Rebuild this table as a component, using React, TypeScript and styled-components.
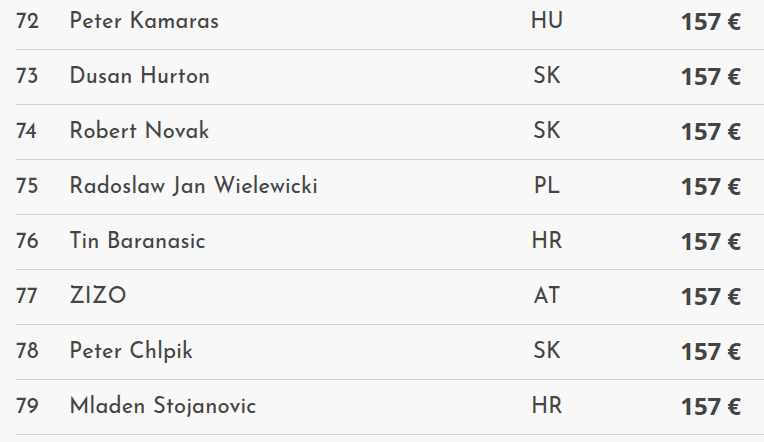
import React from "react";
import styled, { createGlobalStyle } from "styled-components";

const GlobalStyle = createGlobalStyle`
  html, body {
    margin: 0;
    padding: 0;
    background: #f8f8f8;
    overflow: hidden;
  }
  body {
    font-family: "Josefin Sans", Lato, "Liberation Sans", sans-serif;
    color: #444;
  }
`;

type Entry = { rank: number; name: string; country: string; price: string };

const ENTRIES: Entry[] = [
  { rank: 72, name: "Peter Kamaras", country: "HU", price: "157 €" },
  { rank: 73, name: "Dusan Hurton", country: "SK", price: "157 €" },
  { rank: 74, name: "Robert Novak", country: "SK", price: "157 €" },
  { rank: 75, name: "Radoslaw Jan Wielewicki", country: "PL", price: "157 €" },
  { rank: 76, name: "Tin Baranasic", country: "HR", price: "157 €" },
  { rank: 77, name: "ZIZO", country: "AT", price: "157 €" },
  { rank: 78, name: "Peter Chlpik", country: "SK", price: "157 €" },
  { rank: 79, name: "Mladen Stojanovic", country: "HR", price: "157 €" },
];

const Table = styled.div`
  margin: -5px 0 0 16px;
  display: flex;
  flex-direction: column;
`;

const Row = styled.div`
  display: grid;
  grid-template-columns: 53px 1fr 80px 177px;
  align-items: center;
  height: 54px;
  border-bottom: 1px solid #d2d2d2;
  font-size: 22px;
  letter-spacing: 0.2px;
`;

const Rank = styled.span``;

const Name = styled.span``;

const Country = styled.span`
  text-align: center;
`;

const Price = styled.span`
  text-align: right;
  padding-right: 23px;
  font-weight: 700;
  font-size: 24px;
  font-family: "Open Sans", "Liberation Sans", sans-serif;
  letter-spacing: -0.1px;
  margin-top: -3px;
`;

export default function App() {
  return (
    <>
      <GlobalStyle />
      <Table>
        {ENTRIES.map((e) => (
          <Row key={e.rank}>
            <Rank>{e.rank}</Rank>
            <Name>{e.name}</Name>
            <Country>{e.country}</Country>
            <Price>{e.price}</Price>
          </Row>
        ))}
      </Table>
    </>
  );
}
